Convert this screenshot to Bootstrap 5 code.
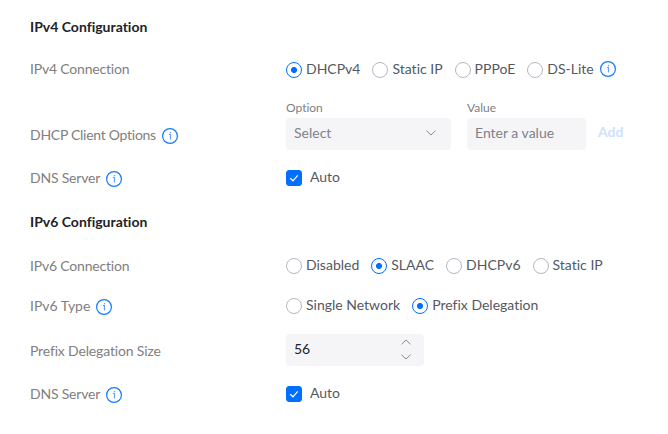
<!DOCTYPE html>
<html lang="en">
<head>
<meta charset="utf-8">
<meta name="viewport" content="width=device-width, initial-scale=1">
<title>IP Configuration</title>
<link href="https://cdn.jsdelivr.net/npm/bootstrap@5.3.0/dist/css/bootstrap.min.css" rel="stylesheet">
<style>
body { font-family: Lato, sans-serif; font-size: 14px; line-height: 20px; color: #55585f; background: #fff; overflow: hidden; font-variant-ligatures: none; }
.settings { padding: 17px 0 0 30px; }
.section-title { font-size: 14px; line-height: 20px; font-weight: 700; color: #212327; }
.setting { height: 40px; }
.setting-label { width: 256px; flex: none; color: #808080; gap: 6px; letter-spacing: -.19px; }
.setting-label.regular { letter-spacing: 0; }
.setting-label .info { margin-top: 2px; }
.first-label { padding-bottom: 2px; }
.size-label { padding-top: 2px; letter-spacing: -.16px; }
.options-label { padding-bottom: 5px; letter-spacing: -.27px; }
.tall { height: 50px; }
.stepper-row { height: 48px; }
.choices { gap: 12px; }
.form-check.choice { display: flex; align-items: center; gap: 4px; padding: 0; margin: 0; min-height: 0; white-space: nowrap; }
.choice .form-check-input { width: 16px; height: 16px; margin: 0; float: none; flex: none; border-color: #b6b6c2; background-size: 16px; }
.choice .form-check-input[type=radio]:checked { background-color: #fff; border-color: #006fff; background-image: radial-gradient(circle, #006fff 2.7px, transparent 3.3px); background-size: auto; }
.choice .form-check-input[type=checkbox] { border-radius: 3px; }
.choice .form-check-input[type=checkbox]:checked { background-color: #006fff; border-color: #006fff; background-image: none; }
.tick-box { position: relative; height: 16px; display: flex; }
.tick-box svg { position: absolute; inset: 0; pointer-events: none; }
.choice.auto { gap: 8px; }
.choice-text { position: relative; top: -1px; }
.info { width: 16px; height: 16px; flex: none; }
.choice .info { margin: 0 0 2px 2px; }
.field-caption { font-size: 12px; line-height: 16px; color: #808080; margin-bottom: 2px; }
.field { height: 32px; background: #f5f5f8 !important; border: 0; border-radius: 4px; color: #80828a; padding: 0 8px 2px; font-size: 14px; }
.field::placeholder { color: #80828a; }
.option-field { width: 165px; padding-right: 15px; }
.value-field { width: 119px; padding-bottom: 3px; }
.size-field { width: 138px; color: #212327; padding-right: 13px; }
.steps { gap: 9px; padding-top: 1px; }
.add-link.btn:disabled { color: #cce2ff; opacity: 1; font-weight: 700; height: 36px; margin-left: 12px; font-size: 14px; border: 0; padding: 0 0 2px; }
.connection-row { margin-top: 13px; }
.options-row { margin-top: 10px; }
.space-above { margin-top: 14px; }
</style>
</head>
<body>
<svg class="d-none">
  <symbol id="info" viewBox="0 0 16 16"><circle cx="8" cy="8" r="7.4" fill="none" stroke="#1479ff" stroke-width="1.2"/><path d="M7 6.5H8.5V11.5" fill="none" stroke="#5ca3ff" stroke-width="1.1"/><path d="M7.8 4h1.3v1.300H7.8z" fill="#5ca3ff"/></symbol>
  <symbol id="tick" viewBox="0 0 16 16"><path d="M4.3 8.2 7 10.8 11.7 5.4" fill="none" stroke="#fff" stroke-width="1.2"/></symbol>
  <symbol id="down" viewBox="0 0 10 6"><path d="M.5 .7 5 5 9.500 .7" fill="none" stroke="#8a8b94"/></symbol>
  <symbol id="up" viewBox="0 0 10 6"><path d="M.5 5.300 5 1 9.500 5.300" fill="none" stroke="#8a8b94"/></symbol>
</svg>
<main class="settings">
  <h2 class="section-title mb-0">IPv4 Configuration</h2>
  <div class="setting connection-row d-flex align-items-center">
    <div class="setting-label first-label">IPv4 Connection</div>
    <div class="choices d-flex align-items-center">
      <label class="form-check choice"><input class="form-check-input" type="radio" name="v4" checked><span class="choice-text">DHCPv4</span></label>
      <label class="form-check choice"><input class="form-check-input" type="radio" name="v4"><span class="choice-text">Static IP</span></label>
      <label class="form-check choice"><input class="form-check-input" type="radio" name="v4"><span class="choice-text">PPPoE</span></label>
      <label class="form-check choice"><input class="form-check-input" type="radio" name="v4"><span class="choice-text">DS-Lite</span><svg class="info"><use href="#info"/></svg></label>
    </div>
  </div>
  <div class="setting options-row tall d-flex align-items-end">
    <div class="setting-label options-label d-flex align-items-center">DHCP Client Options <svg class="info"><use href="#info"/></svg></div>
    <div>
      <div class="field-caption">Option</div>
      <div class="field option-field d-flex align-items-center justify-content-between">Select <svg width="10" height="6"><use href="#down"/></svg></div>
    </div>
    <div class="ms-3">
      <div class="field-caption">Value</div>
      <input class="form-control field value-field" placeholder="Enter a value">
    </div>
    <button class="btn add-link" disabled>Add</button>
  </div>
  <div class="setting d-flex align-items-center mt-2">
    <div class="setting-label d-flex align-items-center">DNS Server <svg class="info"><use href="#info"/></svg></div>
    <label class="form-check choice auto"><span class="tick-box"><input class="form-check-input" type="checkbox" checked><svg width="16" height="16"><use href="#tick"/></svg></span><span class="choice-text">Auto</span></label>
  </div>
  <h2 class="section-title space-above mb-0">IPv6 Configuration</h2>
  <div class="setting space-above d-flex align-items-center">
    <div class="setting-label">IPv6 Connection</div>
    <div class="choices d-flex align-items-center">
      <label class="form-check choice"><input class="form-check-input" type="radio" name="v6"><span class="choice-text">Disabled</span></label>
      <label class="form-check choice"><input class="form-check-input" type="radio" name="v6" checked><span class="choice-text">SLAAC</span></label>
      <label class="form-check choice"><input class="form-check-input" type="radio" name="v6"><span class="choice-text">DHCPv6</span></label>
      <label class="form-check choice"><input class="form-check-input" type="radio" name="v6"><span class="choice-text">Static IP</span></label>
    </div>
  </div>
  <div class="setting d-flex align-items-center">
    <div class="setting-label regular d-flex align-items-center">IPv6 Type <svg class="info"><use href="#info"/></svg></div>
    <div class="choices d-flex align-items-center">
      <label class="form-check choice"><input class="form-check-input" type="radio" name="type"><span class="choice-text">Single Network</span></label>
      <label class="form-check choice"><input class="form-check-input" type="radio" name="type" checked><span class="choice-text">Prefix Delegation</span></label>
    </div>
  </div>
  <div class="setting stepper-row d-flex align-items-center">
    <div class="setting-label size-label">Prefix Delegation Size</div>
    <div class="field size-field d-flex align-items-center justify-content-between">56
      <span class="steps d-flex flex-column"><svg width="10" height="6"><use href="#up"/></svg><svg width="10" height="6"><use href="#down"/></svg></span>
    </div>
  </div>
  <div class="setting d-flex align-items-center">
    <div class="setting-label d-flex align-items-center">DNS Server <svg class="info"><use href="#info"/></svg></div>
    <label class="form-check choice auto"><span class="tick-box"><input class="form-check-input" type="checkbox" checked><svg width="16" height="16"><use href="#tick"/></svg></span><span class="choice-text">Auto</span></label>
  </div>
</main>
<script src="https://cdn.jsdelivr.net/npm/bootstrap@5.3.0/dist/js/bootstrap.bundle.min.js"></script>
</body>
</html>
